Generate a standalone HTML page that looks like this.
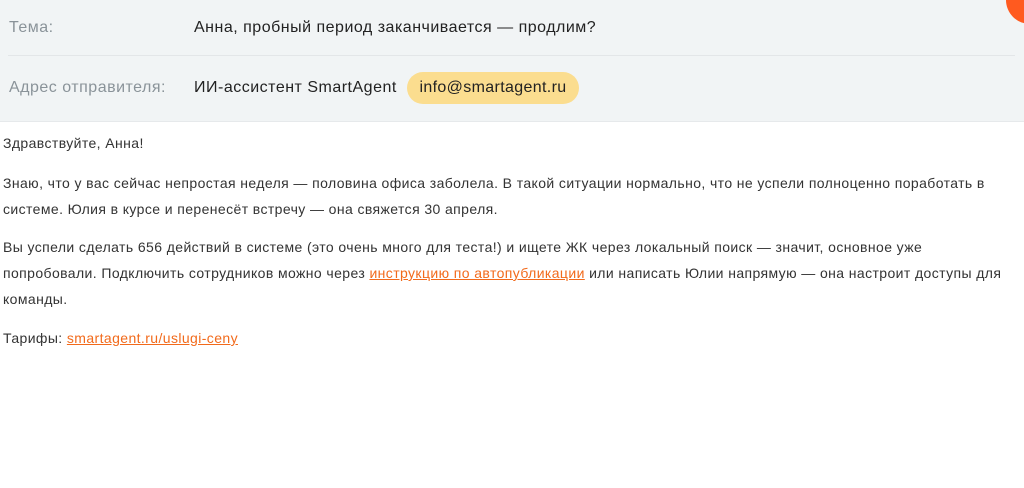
<!DOCTYPE html>
<html><head><meta charset="utf-8"><style>
body{margin:0;width:1024px;height:488px;background:#fff;font-family:"Liberation Sans",sans-serif;overflow:hidden;position:relative}
.hdr{position:absolute;left:0;top:0;width:1024px;height:121px;background:#f1f4f5;border-bottom:1px solid #e6e9eb}
.div{position:absolute;left:8px;right:9px;top:55px;height:1px;background:#e3e6e8}
.lbl{position:absolute;left:9px;font-size:16px;color:#8a9399;letter-spacing:0.5px}
.val{position:absolute;left:194px;font-size:16px;color:#222;letter-spacing:0.5px}
.pill{position:absolute;left:407px;top:72px;width:172px;height:32px;border-radius:16px;background:#fbdd8f;font-size:16px;color:#222;line-height:32px;text-align:center;letter-spacing:0.35px}
.dot{position:absolute;left:1006px;top:-24px;width:48px;height:48px;border-radius:50%;background:#ff5a1f}
.b{position:absolute;left:3px;font-size:14px;color:#333;line-height:26px;width:1012px;letter-spacing:0.4px}
a{color:#f26a1b;text-decoration:underline}
</style></head><body>
<div class="hdr"></div><div class="div"></div><div class="dot"></div>
<div class="lbl" style="top:19px">Тема:</div>
<div class="val" style="top:19px">Анна, пробный период заканчивается — продлим?</div>
<div class="lbl" style="top:79px">Адрес отправителя:</div>
<div class="val" style="top:79px">ИИ-ассистент SmartAgent</div>
<div class="pill">info@smartagent.ru</div>
<div class="b" style="top:130px">Здравствуйте, Анна!</div>
<div class="b" style="top:170px">Знаю, что у вас сейчас непростая неделя — половина офиса заболела. В такой ситуации нормально, что не успели полноценно поработать в системе. Юлия в курсе и перенесёт встречу — она свяжется 30 апреля.</div>
<div class="b" style="top:234px">Вы успели сделать 656 действий в системе (это очень много для теста!) и ищете ЖК через локальный поиск — значит, основное уже попробовали. Подключить сотрудников можно через <a>инструкцию по автопубликации</a> или написать Юлии напрямую — она настроит доступы для команды.</div>
<div class="b" style="top:325px">Тарифы: <a>smartagent.ru/uslugi-ceny</a></div>
</body></html>
